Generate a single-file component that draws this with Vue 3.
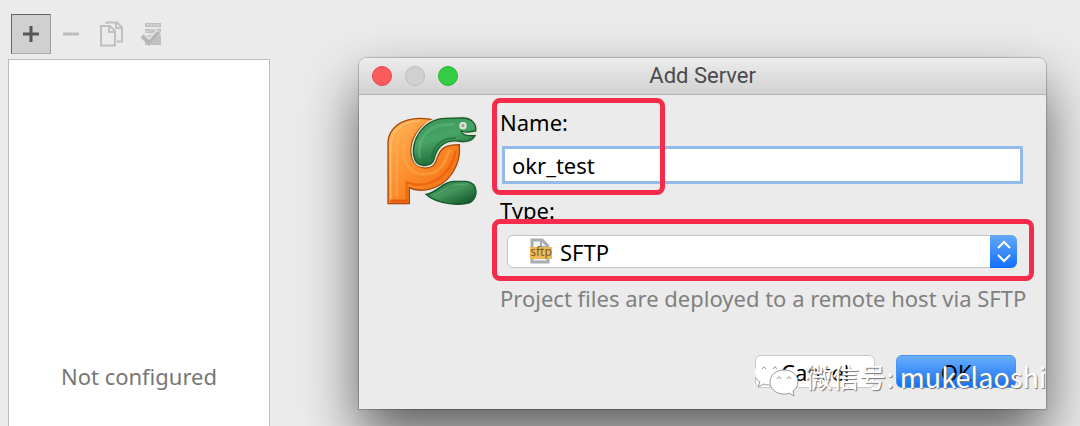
<script setup>

import {ref} from "vue";

const serverName = ref("okr_test")
const serverType = ref("SFTP")
</script>

<template>
  <div class="page">
    <div class="sidebar">
      <div class="toolbar">
        <button class="tool-btn active" aria-label="Add">
          <svg width="38" height="38" viewBox="0 0 38 38">
            <path d="M11 19H27M19 11V27" stroke="#555" stroke-width="3"/>
          </svg>
        </button>
        <button class="tool-btn" aria-label="Remove" disabled>
          <svg width="38" height="38" viewBox="0 0 38 38">
            <path d="M11 19H27" stroke="#bdbdbd" stroke-width="3"/>
          </svg>
        </button>
        <button class="tool-btn" aria-label="Copy" disabled>
          <svg width="38" height="38" viewBox="0 0 38 38" fill="none" stroke="#c0c0c0" stroke-width="2">
            <path d="M14.500 9V7.500H25L30 12.500V26.500H25"/>
            <path d="M24 7V13H30"/>
            <path d="M9 11H18L23 16V30.500H9Z" fill="#ebebeb"/>
            <path d="M17 11V17H23"/>
          </svg>
        </button>
        <button class="tool-btn" aria-label="Use as default" disabled>
          <svg width="38" height="38" viewBox="0 0 38 38">
            <path d="M13 8H29V12H13ZM13 14H29V18H13ZM13 20H29V30H13Z" fill="#c0c0c0"/>
            <path d="M15 10H28" stroke="#ebebeb" stroke-width="1" stroke-dasharray="2 1"/>
            <path d="M13 17L29 13M13 21L29 17" stroke="#d8d8d8" stroke-width="1"/>
            <path d="M10 20L17 27L27 16" fill="none" stroke="#e4e4e4" stroke-width="6"/>
            <path d="M10 21L17 28L27 17" fill="none" stroke="#b6b6b6" stroke-width="4"/>
          </svg>
        </button>
      </div>
      <div class="server-list">Not configured</div>
    </div>

    <div class="dialog" role="dialog" aria-labelledby="dialog-title">
      <div class="title-bar">
        <div class="window-btns">
          <button class="window-btn red" aria-label="Close"></button>
          <button class="window-btn" aria-label="Minimize" disabled></button>
          <button class="window-btn green" aria-label="Zoom"></button>
        </div>
        <div id="dialog-title" class="dialog-title">Add Server</div>
      </div>

      <div class="dialog-body">
        <svg class="logo" width="94" height="94" viewBox="48 42 282 282">
          <defs>
            <linearGradient id="orange" x1="0" y1="0" x2="1" y2="1">
              <stop offset="0" stop-color="#ffb85a"/>
              <stop offset="0.5" stop-color="#fb8a2a"/>
              <stop offset="1" stop-color="#f0660c"/>
            </linearGradient>
            <linearGradient id="green" x1="0" y1="0" x2="0.4" y2="1">
              <stop offset="0" stop-color="#3a9358"/>
              <stop offset="0.5" stop-color="#48a466"/>
              <stop offset="1" stop-color="#176632"/>
            </linearGradient>
            <linearGradient id="tail" x1="0" y1="0" x2="1" y2="1">
              <stop offset="0" stop-color="#1d6d3a"/>
              <stop offset="0.45" stop-color="#45985d"/>
              <stop offset="1" stop-color="#0c4c22"/>
            </linearGradient>
          </defs>
          <path d="M54 311V130C54 84 96 55 150 55C168 55 182 57 192 62C145 72 116 125 124 165C128 200 165 212 188 198C203 188 200 154 224 142C238 134 254 134 268 134C274 192 240 254 176 268C150 273 130 270 118 263V311Z" fill="url(#orange)" stroke="#a64a0c" stroke-width="4"/>
          <path d="M62 304V135C62 92 100 64 150 63" fill="none" stroke="#ffc880" stroke-width="5" opacity="0.6"/>
          <path d="M110 304V246C150 268 238 250 258 150" fill="none" stroke="#e85d08" stroke-width="7" opacity="0.7"/>
          <path d="M60 303H112" stroke="#e04e04" stroke-width="9" opacity="0.7"/>
          <path d="M80 290V135C80 102 100 82 128 74C100 106 94 150 106 182C124 232 190 238 222 190C232 174 230 160 242 150" fill="none" stroke="#ffa94a" stroke-width="9" opacity="0.5"/>
          <path d="M192 178C186 199 152 203 138 185C113 140 150 56 230 55L278 54C305 54 320 72 317 93L294 96Q282 97 274 93C275 108 298 108 315 107C306 123 286 127 265 123C222 119 200 143 192 178Z" fill="url(#green)" stroke="#e6e0d4" stroke-width="11"/>
          <path d="M192 178C186 199 152 203 138 185C113 140 150 56 230 55L278 54C305 54 320 72 317 93L294 96Q282 97 274 93C275 108 298 108 315 107C306 123 286 127 265 123C222 119 200 143 192 178Z" fill="url(#green)" stroke="#14592c" stroke-width="4"/>
          <path d="M151 174C138 135 162 82 220 74H252" fill="none" stroke="#6cc088" stroke-width="8" opacity="0.4"/>
          <path d="M184 174C192 137 214 114 258 114" fill="none" stroke="#1b6d38" stroke-width="6" opacity="0.6"/>
          <circle cx="279" cy="77" r="8" fill="#8fa58f" stroke="#e0e8d8" stroke-width="6"/>
          <path d="M168 283C208 276 214 246 250 244H288C326 248 326 294 300 308C268 318 198 312 168 283Z" fill="url(#tail)" stroke="#14592c" stroke-width="4"/>
          <path d="M190 285C222 278 228 256 258 254H286" fill="none" stroke="#72b184" stroke-width="4" opacity="0.5"/>
        </svg>

        <div class="form">
          <div class="field name-field">
            <label for="name-input">Name:</label>
            <input id="name-input" v-model="serverName">
            <div class="highlight name-highlight"></div>
          </div>
          <div class="field type-field">
            <label for="type-select">Type:</label>
            <div class="select-box">
              <select id="type-select" v-model="serverType">
                <option>SFTP</option>
              </select>
              <svg class="sftp-icon" width="24" height="26" viewBox="0 0 24 26">
                <path d="M3 2H13L19 8V24H3Z" fill="#f4f4f4" stroke="#a7adb1" stroke-width="3"/>
                <path d="M12 2V9H19" fill="none" stroke="#a7adb1" stroke-width="2"/>
                <rect x="1" y="9" width="22" height="12" fill="#f2b653"/>
                <text x="12" y="18" text-anchor="middle" class="sftp-text">sftp</text>
              </svg>
              <svg class="arrows" width="27" height="33" viewBox="0 0 27 33" fill="none" stroke="#fff" stroke-width="2">
                <path d="M8 13L14 7L20 13M8 20L14 26L20 20"/>
              </svg>
              <div class="highlight type-highlight"></div>
            </div>
          </div>
          <div class="hint">Project files are deployed to a remote host via SFTP</div>
          <div class="btn-container">
            <button class="btn">Cancel</button>
            <button class="btn primary">OK</button>
          </div>
        </div>
      </div>

      <div class="watermark">
        <svg width="46" height="40" viewBox="0 0 46 40">
          <path d="M15 3C7 3 1 8 1 15C1 20 3 23 6 25L4 30L10 27C13 28 17 28 20 27C26 25 29 21 29 15C29 8 23 3 15 3Z" fill="#fff"/>
          <path d="M2 21C3 23 4 24 6 25L4 30L10 27C12 28 14 28 16 28" fill="none" stroke="#999" stroke-width="1"/>
          <path d="M30 13C22 13 16 18 16 25C16 32 22 37 30 37C32 37 34 37 35 36L40 39L39 34C42 32 44 29 44 25C44 18 38 13 30 13Z" fill="#fff" stroke="#999" stroke-width="1"/>
          <path d="M8 12Q10 8 12 12M19 12Q21 8 23 12M23 22Q25 18 27 22M33 22Q35 18 37 22" fill="none" stroke="#999" stroke-width="1"/>
        </svg>
        <span>微信号: mukelaoshi</span>
      </div>
    </div>
  </div>
</template>

<style>
body {
  background-color: #ebebeb;
}
</style>

<style scoped>
.page {
  display: flex;
  align-items: flex-start;
  box-sizing: border-box;
  min-height: 100vh;
  padding: 0 34px 0 8px;
  overflow: hidden;
  background-color: #ebebeb;
  font-family: "Noto Sans", "Noto Sans CJK SC", sans-serif;
  font-size: 22px;
  line-height: 24px;
}

button, input, select {
  font: inherit;
  color: #000;
}

.sidebar {
  display: flex;
  flex: 0 0 262px;
  flex-direction: column;
  align-self: stretch;
  min-height: 100vh;
}

.toolbar {
  display: flex;
  padding: 14px 3px 5px;
}

.tool-btn {
  width: 40px;
  height: 40px;
  padding: 0;
  border: 1px solid transparent;
  background: none;
}

.tool-btn svg {
  display: block;
}

.tool-btn.active {
  border-color: #666 #999 #aaa #666;
  background-color: #d0d0d0;
}

.server-list {
  display: flex;
  flex: 1;
  align-items: flex-end;
  justify-content: center;
  box-sizing: border-box;
  padding-bottom: 38px;
  border: 1px solid #bcbcbc;
  border-bottom: 0;
  background-color: #fff;
  color: #777;
}

.dialog {
  position: relative;
  flex: 1;
  margin: 58px 0 0 89px;
  border-radius: 8px 8px 0 0;
  background-color: #ebebeb;
  box-shadow: 0 0 1px 1px rgba(0, 0, 0, 0.2), 0 28px 56px rgba(0, 0, 0, 0.6);
}

.title-bar {
  display: grid;
  grid-template-columns: 1fr auto 1fr;
  align-items: center;
  box-sizing: border-box;
  height: 37px;
  padding: 0 13px;
  border-bottom: 1px solid #b4b4b4;
  border-radius: 8px 8px 0 0;
  background: linear-gradient(#ececec, #d2d2d2);
}

.window-btns {
  display: flex;
  gap: 13px;
}

.window-btn {
  width: 20px;
  height: 20px;
  padding: 0;
  border: 1px solid #bcbcbc;
  border-radius: 50%;
  background-color: #d0d0d0;
}

.window-btn.red {
  border-color: #e5484b;
  background-color: #fc5b5c;
}

.window-btn.green {
  border-color: #28b436;
  background-color: #34cc43;
}

.dialog-title {
  color: #4a4a4a;
  font-family: Roboto, sans-serif;
}

.dialog-body {
  display: flex;
  align-items: flex-start;
  gap: 20px;
  padding: 15px 20px 21px 27px;
}

.logo {
  flex: none;
  margin-top: 4px;
}

.form {
  flex: 1;
  min-width: 0;
}

.field {
  position: relative;
  display: flex;
  flex-direction: column;
}

.name-field {
  gap: 12px;
}

.type-field {
  gap: 13px;
  margin-top: 14px;
}

#name-input {
  box-sizing: border-box;
  height: 38px;
  margin: 0 3px 0 2px;
  padding: 0 7px;
  border: 3px solid #92bbec;
  outline: none;
  background-color: #fff;
}

.highlight {
  position: absolute;
  box-sizing: border-box;
  border: 5px solid #f52b4b;
  border-radius: 8px;
  pointer-events: none;
}

.name-highlight {
  top: -12px;
  bottom: -11px;
  left: -8px;
  width: 173px;
}

.select-box {
  position: relative;
  height: 33px;
  margin: 0 9px 0 7px;
}

#type-select {
  width: 100%;
  height: 33px;
  padding: 0 30px 0 52px;
  border: 1px solid #c4c4c4;
  border-radius: 6px;
  background-color: #fff;
  appearance: none;
}

.sftp-icon {
  position: absolute;
  top: 3px;
  left: 22px;
}

.sftp-text {
  fill: #76603c;
  font-size: 12px;
}

.arrows {
  position: absolute;
  top: 0;
  right: 0;
  border-radius: 0 6px 6px 0;
  background: linear-gradient(#64a9f8, #136ffb);
  pointer-events: none;
}

.type-highlight {
  top: -16px;
  right: -17px;
  bottom: -13px;
  left: -15px;
}

.hint {
  margin-top: 18px;
  color: #808080;
  white-space: nowrap;
}

.btn-container {
  display: flex;
  justify-content: flex-end;
  gap: 21px;
  margin: 45px 10px 0 0;
}

.btn {
  width: 120px;
  height: 33px;
  padding: 0;
  border: 1px solid #cacaca;
  border-radius: 6px;
  background-color: #fff;
}

.btn.primary {
  border-color: #4a94f0;
  background: linear-gradient(#69b0fa, #166ffb);
}

.watermark {
  position: absolute;
  right: 0;
  bottom: 12px;
  display: flex;
  align-items: center;
  gap: 5px;
  color: #fff;
  font-family: "Noto Sans CJK SC", sans-serif;
  font-size: 27px;
  line-height: 40px;
  text-shadow: 1px 1px 1px #777;
  white-space: nowrap;
  pointer-events: none;
}
</style>
